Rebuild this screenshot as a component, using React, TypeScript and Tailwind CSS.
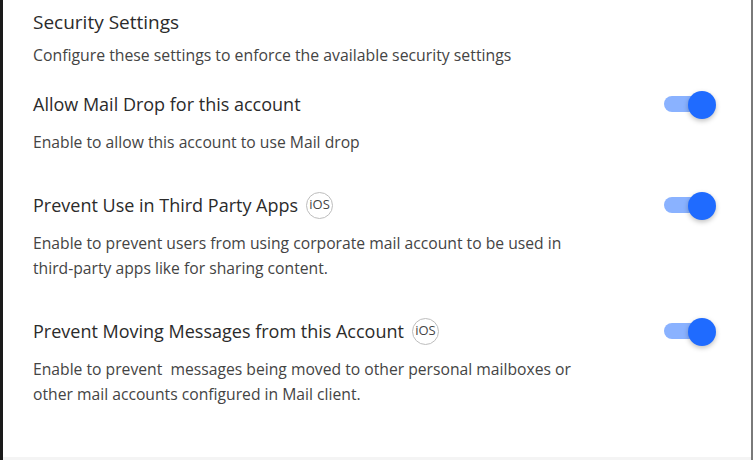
import { useState } from "react";

type Setting = {
  id: string;
  title: string;
  ios?: boolean;
  description: string[];
};

const SETTINGS: Setting[] = [
  {
    id: "mail-drop",
    title: "Allow Mail Drop for this account",
    description: ["Enable to allow this account to use Mail drop"],
  },
  {
    id: "third-party",
    title: "Prevent Use in Third Party Apps",
    ios: true,
    description: [
      "Enable to prevent users from using corporate mail account to be used in",
      "third-party apps like for sharing content.",
    ],
  },
  {
    id: "moving",
    title: "Prevent Moving Messages from this Account",
    ios: true,
    description: [
      "Enable to prevent \u00a0messages being moved to other personal mailboxes or",
      "other mail accounts configured in Mail client.",
    ],
  },
];

const Toggle = ({ on, onChange }: { on: boolean; onChange: () => void }) => (
  <button
    type="button"
    onClick={onChange}
    className="relative flex items-center w-[54px] h-[27px] shrink-0"
  >
    <span
      className={`absolute left-0 w-[40px] h-[16px] rounded-full ${
        on ? "bg-[#8ab2ff]" : "bg-[#c9ccd1]"
      }`}
    />
    <span
      className={`absolute top-0 w-[28px] h-[28px] rounded-full shadow-[0_2px_5px_rgba(0,0,0,0.25)] ${
        on ? "left-[24px] bg-[#1f6bff]" : "left-0 bg-white"
      }`}
    />
  </button>
);

const App = () => {
  const [values, setValues] = useState<Record<string, boolean>>({
    "mail-drop": true,
    "third-party": true,
    moving: true,
  });

  return (
    <div className="w-[753px] h-[460px] bg-white flex flex-col border-l-[3px] border-l-[#1a1a1a] border-r-2 border-r-[#7a7a7a] font-['Open_Sans',sans-serif]">
      <div className="flex-1 flex flex-col pl-[30px] pr-[33px] pt-[10px]">
        <h2 className="text-[19px] leading-[24px] text-[#2b2b2b]">Security Settings</h2>
        <p className="mt-[11px] text-[15.8px] leading-[20px] text-[#444]">
          Configure these settings to enforce the available security settings
        </p>
        <div className="flex flex-col">
          {SETTINGS.map((s, i) => (
            <div key={s.id} className={i === 0 ? "mt-[24px]" : "mt-[35px]"}>
              <div className="flex items-center justify-between h-[30px]">
                <div className="flex items-center gap-[8px]">
                  <span className="text-[18px] leading-[24px] text-[#2b2b2b]">{s.title}</span>
                  {s.ios && (
                    <span className="flex items-center justify-center w-[27px] h-[27px] rounded-full border border-[#bdbdbd] text-[13px] text-[#444]">
                      iOS
                    </span>
                  )}
                </div>
                <Toggle
                  on={values[s.id]}
                  onChange={() => setValues((v) => ({ ...v, [s.id]: !v[s.id] }))}
                />
              </div>
              <div className="mt-[11px] text-[15.7px] leading-[25px] text-[#444]">
                {s.description.map((line) => (
                  <p key={line}>{line}</p>
                ))}
              </div>
            </div>
          ))}
        </div>
      </div>
      <div className="h-[3px] bg-[#f4f4f4]" />
    </div>
  );
};

export default App;
